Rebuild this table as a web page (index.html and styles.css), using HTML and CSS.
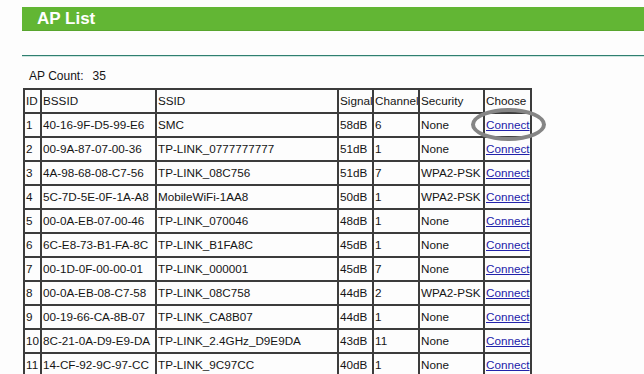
FILE: index.html
```html
<!DOCTYPE html>
<html>
<head>
<meta charset="utf-8">
<link rel="stylesheet" href="styles.css">
</head>
<body>
<div class="page">
  <div class="titlebar">AP List</div>
  <div class="rule"></div>
  <div class="count"><span class="count-label">AP Count:</span><span class="count-value">35</span></div>
  <div class="table-wrap">
    <table class="aplist">
      <colgroup>
        <col class="c-id"><col class="c-bssid"><col class="c-ssid"><col class="c-signal"><col class="c-channel"><col class="c-security"><col class="c-choose">
      </colgroup>
      <tr><td>ID</td><td>BSSID</td><td>SSID</td><td>Signal</td><td>Channel</td><td>Security</td><td>Choose</td></tr>
      <tr><td>1</td><td>40-16-9F-D5-99-E6</td><td>SMC</td><td>58dB</td><td>6</td><td>None</td><td><a href="#">Connect</a></td></tr>
      <tr><td>2</td><td>00-9A-87-07-00-36</td><td>TP-LINK_0777777777</td><td>51dB</td><td>1</td><td>None</td><td><a href="#">Connect</a></td></tr>
      <tr><td>3</td><td>4A-98-68-08-C7-56</td><td>TP-LINK_08C756</td><td>51dB</td><td>7</td><td>WPA2-PSK</td><td><a href="#">Connect</a></td></tr>
      <tr><td>4</td><td>5C-7D-5E-0F-1A-A8</td><td>MobileWiFi-1AA8</td><td>50dB</td><td>1</td><td>WPA2-PSK</td><td><a href="#">Connect</a></td></tr>
      <tr><td>5</td><td>00-0A-EB-07-00-46</td><td>TP-LINK_070046</td><td>48dB</td><td>1</td><td>None</td><td><a href="#">Connect</a></td></tr>
      <tr><td>6</td><td>6C-E8-73-B1-FA-8C</td><td>TP-LINK_B1FA8C</td><td>45dB</td><td>1</td><td>None</td><td><a href="#">Connect</a></td></tr>
      <tr><td>7</td><td>00-1D-0F-00-00-01</td><td>TP-LINK_000001</td><td>45dB</td><td>7</td><td>None</td><td><a href="#">Connect</a></td></tr>
      <tr><td>8</td><td>00-0A-EB-08-C7-58</td><td>TP-LINK_08C758</td><td>44dB</td><td>2</td><td>WPA2-PSK</td><td><a href="#">Connect</a></td></tr>
      <tr><td>9</td><td>00-19-66-CA-8B-07</td><td>TP-LINK_CA8B07</td><td>44dB</td><td>1</td><td>None</td><td><a href="#">Connect</a></td></tr>
      <tr><td>10</td><td>8C-21-0A-D9-E9-DA</td><td>TP-LINK_2.4GHz_D9E9DA</td><td>43dB</td><td>11</td><td>None</td><td><a href="#">Connect</a></td></tr>
      <tr><td>11</td><td>14-CF-92-9C-97-CC</td><td>TP-LINK_9C97CC</td><td>40dB</td><td>1</td><td>None</td><td><a href="#">Connect</a></td></tr>
    </table>
    <div class="highlight"></div>
  </div>
</div>
</body>
</html>
```

FILE: styles.css
```css
html, body {
  margin: 0;
  padding: 0;
  background: #fdfdfd;
  overflow: hidden;
}
body {
  font-family: "Liberation Sans", Arial, sans-serif;
  font-size: 12px;
  color: #151515;
}
.page {
  padding: 7px 0 0 22px;
}
.titlebar {
  height: 24px;
  line-height: 24px;
  background: #62b634;
  border-bottom: 1px solid #58a52e;
  box-sizing: border-box;
  color: #ffffff;
  font-weight: bold;
  font-size: 17px;
  padding-left: 15px;
}
.rule {
  margin-top: 24px;
  height: 1px;
  background: #2f7f70;
  border-bottom: 1px solid #cfe6e0;
}
.count {
  margin-top: 11px;
  height: 16px;
  line-height: 16px;
  padding-left: 7px;
}
.count-value {
  margin-left: 9px;
}
.table-wrap {
  position: relative;
  margin-top: 4px;
  margin-left: 1px;
}
.aplist {
  border-collapse: collapse;
  table-layout: fixed;
  width: 507px;
  font-size: 11.7px;
}
.aplist td {
  border: 2px solid #3c3c3c;
  height: 24px;
  padding: 0 0 0 1px;
  box-sizing: border-box;
  white-space: nowrap;
  overflow: hidden;
  line-height: 14px;
}
.c-id { width: 17px; }
.c-bssid { width: 115px; }
.c-ssid { width: 182px; }
.c-signal { width: 35px; }
.c-channel { width: 46px; }
.c-security { width: 65px; }
.c-choose { width: 47px; }
.aplist a {
  color: #2222aa;
  text-decoration: underline;
}
.highlight {
  position: absolute;
  left: 448px;
  top: 20px;
  width: 67px;
  height: 25px;
  border: 4px solid #858585;
  border-radius: 50%;
}
```
